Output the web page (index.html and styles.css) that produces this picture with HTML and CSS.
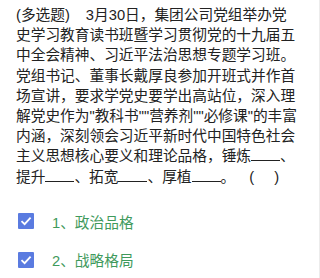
FILE: index.html
```html
<!DOCTYPE html>
<html lang="zh-CN">

<head>
    <meta charset="UTF-8">
    <meta name="viewport" content="width=device-width, initial-scale=1.0">
    <title>多选题</title>
    <link rel="stylesheet" href="styles.css">
</head>

<body>
    <div class="question">
        <p class="stem">(多选题)<span class="gap"></span>3月30日，集团公司党组举办党史学习教育读书班暨学习贯彻党的十九届五中全会精神、习近平法治思想专题学习班。党组书记、董事长戴厚良参加开班式并作首场宣讲，要求学党史要学出高站位，深入理解党史作为"教科书""营养剂""必修课"的丰富内涵，深刻领会习近平新时代中国特色社会主义思想核心要义和理论品格，锤炼<span class="blank"></span>、提升<span class="blank"></span>、拓宽<span class="blank"></span>、厚植<span class="blank"></span>。<span class="paren">(<span class="paren-gap"></span>)</span></p>

        <ul class="options">
            <li class="option">
                <span class="check">
                    <svg viewBox="0 0 16 16" width="16" height="16">
                        <path d="M3.5 8.2 L6.6 11.2 L12.6 4.6" fill="none" stroke="#fff" stroke-width="1.8" />
                    </svg>
                </span>
                <span class="label">1、政治品格</span>
            </li>
            <li class="option">
                <span class="check">
                    <svg viewBox="0 0 16 16" width="16" height="16">
                        <path d="M3.5 8.2 L6.6 11.2 L12.6 4.6" fill="none" stroke="#fff" stroke-width="1.8" />
                    </svg>
                </span>
                <span class="label">2、战略格局</span>
            </li>
        </ul>
    </div>
</body>

</html>
```

FILE: styles.css
```css
body {
    margin: 0;
    background-color: #fff;
    font-family: "Liberation Sans", "Noto Sans CJK SC", sans-serif;
    color: #222;
}

.question {
    width: 320px;
    height: 278px;
    box-sizing: border-box;
    padding: 5px 16px 0 16px;
    border-right: 1px solid #ececec;
}

.stem {
    width: 281px;
    margin: 0;
    font-size: 14.7px;
    line-height: 20.2px;
}

.gap {
    display: inline-block;
    width: 16px;
}

.blank {
    display: inline-block;
    width: 29px;
    height: 1px;
    border-bottom: 1px solid #222;
}

.paren {
    margin-left: 14px;
}

.paren-gap {
    display: inline-block;
    width: 20px;
}

.options {
    list-style: none;
    margin: 15px 0 0 0;
    padding: 0 0 0 2px;
}

.option {
    display: flex;
    align-items: center;
    height: 38.5px;
}

.check {
    display: flex;
    width: 16px;
    height: 16px;
    background-color: #5a7be0;
    border-radius: 1px;
}

.label {
    margin-left: 18px;
    font-size: 14.7px;
    color: #3f9a5c;
}
```
